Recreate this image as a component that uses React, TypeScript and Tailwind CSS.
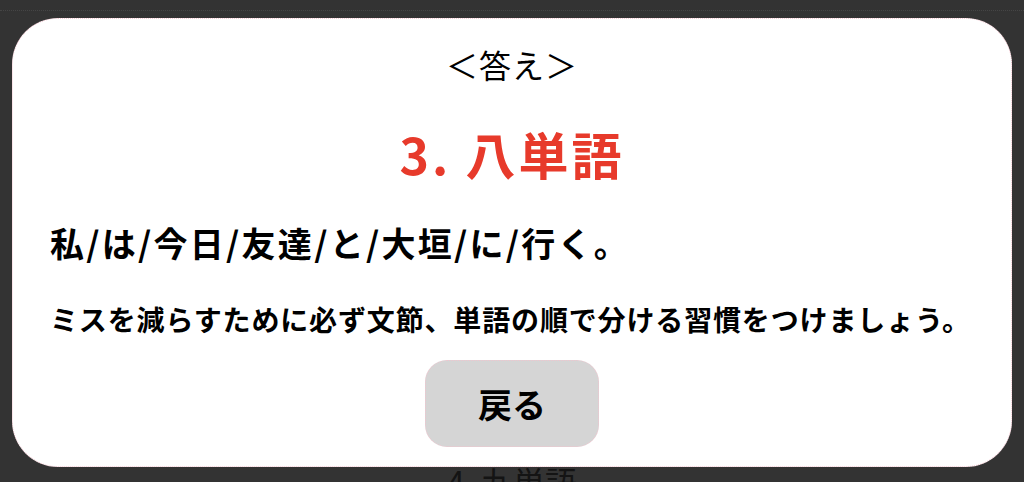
import React from "react";

const font = { fontFamily: '"Noto Sans CJK JP", "Noto Sans", sans-serif' };

function AnswerModal() {
  return (
    <div className="absolute left-[12px] top-[18px] flex h-[449px] w-[1000px] flex-col rounded-[46px] border border-dotted border-[#f6c9d3] bg-white pt-[29px]">
      <p className="text-center text-[32px] leading-none tracking-[1px] text-black">＜答え＞</p>
      <h2 className="mt-[48px] text-center text-[50px] font-bold leading-none tracking-[3px] text-[#e73a2b]">
        3. 八単語
      </h2>
      <p className="mt-[48px] pl-[37px] text-[34px] font-bold leading-none tracking-[2.3px] text-black">
        私/は/今日/友達/と/大垣/に/行く。
      </p>
      <p className="mt-[45px] pl-[37px] text-[28px] font-bold leading-none tracking-[0.85px] text-black">
        ミスを減らすために必ず文節、単語の順で分ける習慣をつけましょう。
      </p>
      <div className="mt-[27px] flex justify-center">
        <button className="flex h-[87px] w-[174px] items-center justify-center rounded-[22px] border border-dotted border-[#f0c4ce] bg-[#d5d5d5] text-[34px] font-bold leading-none text-black">
          戻る
        </button>
      </div>
    </div>
  );
}

export default function App() {
  return (
    <div className="relative h-[482px] w-full overflow-hidden bg-[#333333]" style={font}>
      {/* page behind the overlay */}
      <div className="pt-[10px]">
        <div className="border-t border-dotted border-[#454545]" />
        <div className="h-[454px]" />
        <p className="text-center text-[32px] leading-none text-[#141414]">4. 九単語</p>
      </div>

      <AnswerModal />
    </div>
  );
}
